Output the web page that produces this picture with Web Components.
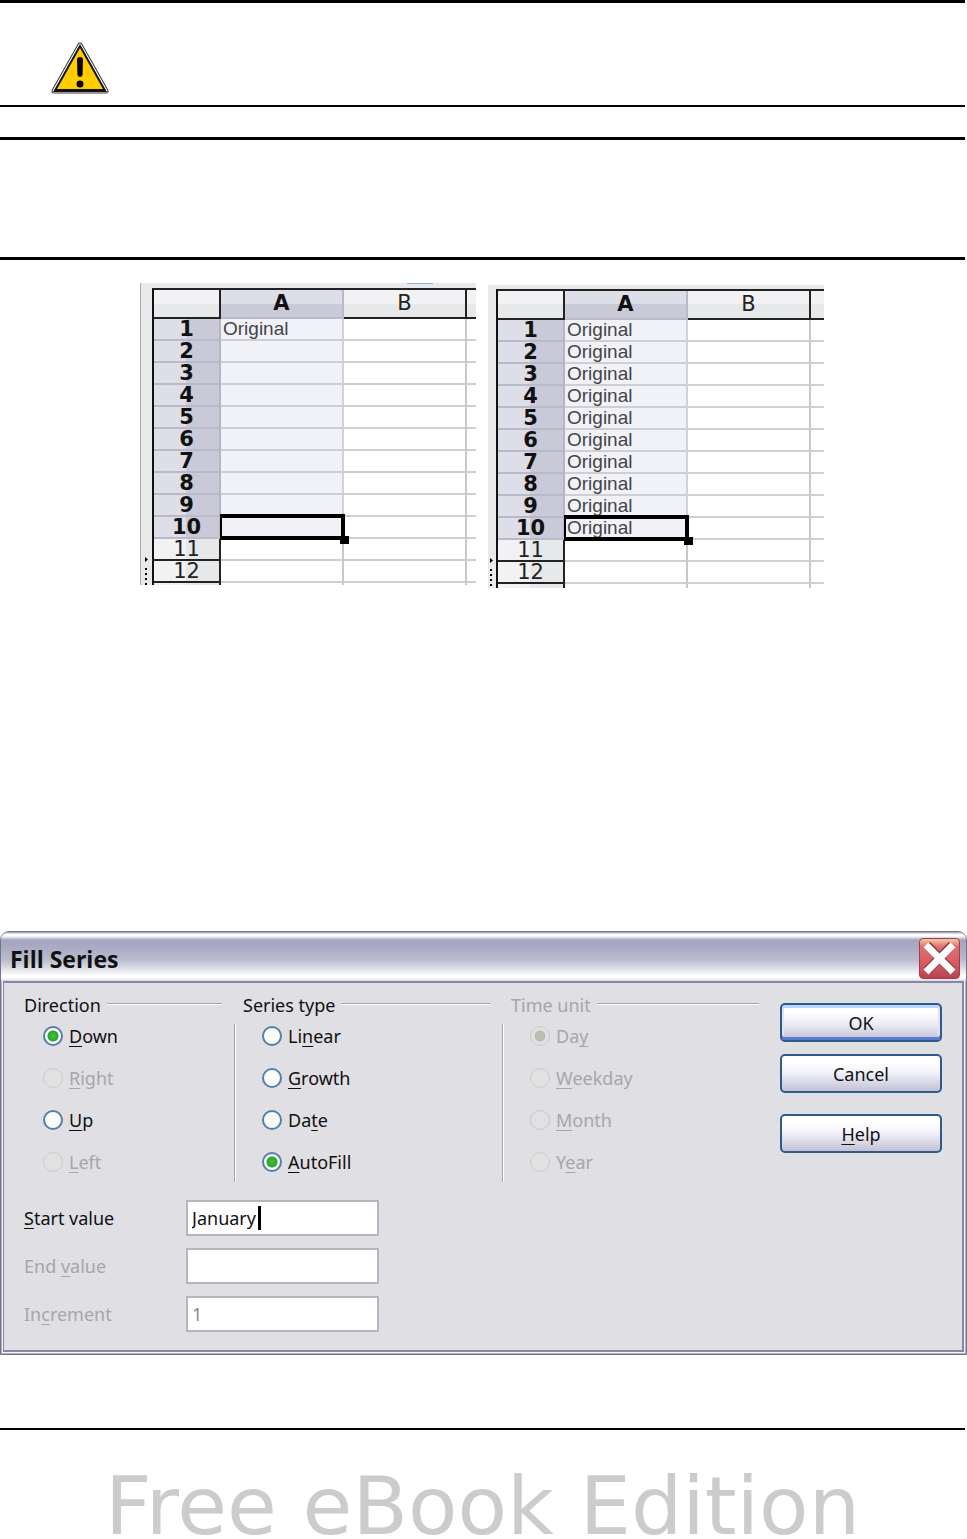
<!DOCTYPE html>
<html lang="en">
<head>
<meta charset="utf-8">
<title>Fill Series</title>
<style>
  body {
    margin: 0;
    background: #fff;
    font-family: "Liberation Sans", sans-serif;
  }
</style>
</head>
<body>
<book-page>
  <note-box class="caution"><warning-icon></warning-icon></note-box>
  <note-box class="blank"></note-box>
  <sheet-pair>
    <calc-sheet class="edge" filled="1"></calc-sheet>
    <calc-sheet class="low" filled="10"></calc-sheet>
  </sheet-pair>
  <fill-dialog heading="Fill Series">
    <radio-group slot="groups" legend="Direction" options="_Down,_Right,_Up,_Left" checked="0" disabled="1,3"></radio-group>
    <radio-group slot="groups" legend="Series type" options="Li_near,_Growth,Da_te,_AutoFill" checked="3"></radio-group>
    <radio-group slot="groups" legend="Time unit" options="Da_y,_Weekday,_Month,Y_ear" checked="0" disabled="0,1,2,3" class="last off"></radio-group>
    <dialog-button slot="buttons" class="default">OK</dialog-button>
    <dialog-button slot="buttons">Cancel</dialog-button>
    <dialog-button slot="buttons" class="apart"><u>H</u>elp</dialog-button>
    <text-field slot="fields" label="_Start value" value="January" caret></text-field>
    <text-field slot="fields" label="End _value" value="" disabled></text-field>
    <text-field slot="fields" label="In_crement" value="1" disabled></text-field>
  </fill-dialog>
  <page-footer>Free eBook Edition</page-footer>
</book-page>

<script>
// "_Down" -> "<u>D</u>own"
const accessKey = (text) => text.replace(/_(.)/, '<u>$1</u>');

class BookPage extends HTMLElement {
  constructor() {
    super();
    this.attachShadow({ mode: 'open' }).innerHTML = `
      <style>
        :host { display: block; }
      </style>
      <slot></slot>
    `;
  }
}

class NoteBox extends HTMLElement {
  constructor() {
    super();
    this.attachShadow({ mode: 'open' }).innerHTML = `
      <style>
        :host {
          display: block;
          box-sizing: border-box;
          margin-right: 2px;
          border-top: 3px solid #000;
          border-bottom: 2px solid #000;
        }
        :host(.caution) { height: 107px; padding: 39px 51px 0; }
        :host(.blank) { height: 123px; margin-top: 30px; border-bottom-width: 3px; }
      </style>
      <slot></slot>
    `;
  }
}

class WarningIcon extends HTMLElement {
  constructor() {
    super();
    this.attachShadow({ mode: 'open' }).innerHTML = `
      <style>
        :host { display: block; }
        svg { display: block; }
      </style>
      <svg width="58" height="53" viewBox="0 0 58 53" aria-hidden="true">
        <path d="M29 3 L55 49 H3 Z" fill="#111" stroke="#333" stroke-width="5" stroke-linejoin="round"/>
        <path d="M29 3 L55 49 H3 Z" fill="#111" stroke="#fff" stroke-width="3" stroke-linejoin="round"/>
        <path d="M29 2 L56 50 H2 Z" fill="#111"/>
        <path d="M29 6 L52 47 H6 Z" fill="#fc0"/>
        <path d="M26 18 Q26 15 29 15 Q32 15 32 18 L31.500 33 Q31 35 29 35 Q27 35 26.500 33 Z" fill="#000"/>
        <circle cx="29" cy="42" r="3.500" fill="#000"/>
      </svg>
    `;
  }
}

class SheetPair extends HTMLElement {
  constructor() {
    super();
    this.attachShadow({ mode: 'open' }).innerHTML = `
      <style>
        :host {
          display: flex;
          justify-content: center;
          align-items: flex-start;
          gap: 12px;
          margin: 23px 3px 0 0;
        }
      </style>
      <slot></slot>
    `;
  }
}

class CalcSheet extends HTMLElement {
  connectedCallback() {
    const filled = Number(this.getAttribute('filled'));
    let rows = '';
    for (let i = 1; i <= 12; i++) {
      const text = i <= filled ? 'Original' : '';
      const cls = i < 10 ? 'sel' : i === 10 ? 'sel cursor' : '';
      rows += `<tr class="${cls}"><th scope="row">${i}</th><td class="a">${text}</td><td></td><td></td></tr>`;
    }
    this.attachShadow({ mode: 'open' }).innerHTML = `
      <style>
        :host {
          display: flex;
          box-sizing: border-box;
          width: 336px;
          height: 302px;
          padding-top: 5px;
          overflow: hidden;
          background: #e8e9ea;
          position: relative;
        }
        :host(.edge) { border-left: 1px solid #aaa; }
        :host(.low) { margin-top: 2px; height: 303px; padding-top: 4px; }
        .gutter {
          box-sizing: border-box;
          flex: none;
          width: 11px;
          padding: 269px 0 0 3px;
        }
        :host(.low) .gutter { width: 8px; padding-left: 1px; }
        .gutter svg { display: block; }
        .tab {
          position: absolute;
          top: 0;
          left: 266px;
          width: 26px;
          height: 1px;
          background: #8faed6;
        }
        table {
          flex: none;
          width: 340px;
          table-layout: fixed;
          border-collapse: separate;
          border-spacing: 0;
          border-left: 2px solid #111;
          border-top: 2px solid #222;
          background: #fff;
        }
        th, td {
          box-sizing: border-box;
          height: 22px;
          padding: 0;
          line-height: 20px;
          white-space: nowrap;
        }
        th { font: 21px/20px "DejaVu Sans", sans-serif; color: #222; }
        thead th {
          height: 29px;
          line-height: 27px;
          border-right: 2px solid #222;
          border-bottom: 2px solid #222;
          background: linear-gradient(#f2f2f4 50%, #e7e8ea 50%);
        }
        thead .a {
          font-weight: bold;
          color: #111;
          border-color: #b9b9cc;
          background: linear-gradient(#dedee8 50%, #c9c9d8 50%);
        }
        tbody th {
          border-right: 2px solid #222;
          border-bottom: 2px solid #222;
          background: linear-gradient(90deg, #f2f2f4 50%, #e7e8ea 50%);
        }
        tbody .sel th {
          font-weight: bold;
          color: #111;
          border-right-color: #b5b5c6;
          border-bottom-color: #b9b9ca;
          background: linear-gradient(90deg, #dedee8 50%, #c9c9d8 50%);
        }
        td {
          border-right: 2px solid #c8c8c8;
          border-bottom: 2px solid #cfcfcf;
        }
        td.a {
          padding-left: 2px;
          font-size: 19px;
          color: #444448;
        }
        .sel td.a { background: #f1f2f7; border-right-color: #d0d0e0; }
        .cursor td.a { position: relative; }
        /* cell cursor with its fill handle */
        .cursor td.a::before {
          content: "";
          position: absolute;
          inset: -3px -3px -3px -1px;
          border: 4px solid #000;
          border-left-width: 2px;
        }
        .cursor td.a::after {
          content: "";
          position: absolute;
          right: -7px;
          bottom: -7px;
          width: 9px;
          height: 8px;
          background: #000;
        }
      </style>
      <div class="gutter">
        <svg width="5" height="28" viewBox="0 0 5 28" aria-hidden="true">
          <path d="M1 0 L4 2.500 L1 5 Z M1 11h2v2h-2z M1 16h2v2h-2z M1 21h2v2h-2z M1 26h2v2h-2z"/>
        </svg>
      </div>
      ${this.classList.contains('edge') ? '<div class="tab"></div>' : ''}
      <table>
        <colgroup><col style="width:67px"><col style="width:123px"><col style="width:123px"><col></colgroup>
        <thead><tr><th></th><th class="a" scope="col">A</th><th scope="col">B</th><th></th></tr></thead>
        <tbody>${rows}<tr><th></th><td></td><td></td><td></td></tr></tbody>
      </table>
    `;
  }
}

class FillDialog extends HTMLElement {
  connectedCallback() {
    this.attachShadow({ mode: 'open' }).innerHTML = `
      <style>
        :host {
          display: block;
          box-sizing: border-box;
          margin-top: 343px;
          border: 1px solid #73738c;
          border-radius: 9px 9px 0 0;
          padding: 0 2px 2px;
          background: #f4f4f8;
          box-shadow: inset 0 0 0 1px #b0b0c4;
          overflow: hidden;
          font: 18px/24px "Noto Sans", sans-serif;
          color: #111;
        }
        header {
          display: flex;
          align-items: center;
          justify-content: space-between;
          box-sizing: border-box;
          height: 49px;
          margin: 0 -2px;
          padding: 4px 6px 0 9px;
          background: linear-gradient(#b0b0c4 0 1px, #fff 2px 4px, #a4a4c0 8px, #adadc6 18px, #bbbccf 28px, #dcdce6 36px, #fff 44px 46px, #d8d8e4 49px);
        }
        h2 {
          margin: 0;
          font: bold 23px/28px "Open Sans", sans-serif;
        }
        .close {
          width: 41px;
          height: 41px;
          padding: 0;
          border: 1px solid #a23c4c;
          border-radius: 4px;
          background: linear-gradient(#f4c8a4, #e07070 20%, #d85c60 60%, #b84450);
        }
        .close svg { display: block; width: 39px; height: 39px; }
        .panel {
          border: 2px solid #8787a2;
          border-left-width: 1px;
          padding: 10px 20px 18px 12px;
          background: #e0dfe3;
        }
        .top {
          display: grid;
          grid-template-columns: 219fr 268fr 269fr 170fr;
        }
        .buttons {
          display: flex;
          flex-direction: column;
          gap: 12px;
          padding: 10px 0 0 8px;
        }
        .fields {
          display: flex;
          flex-direction: column;
          gap: 12px;
          padding: 18px 0 0 8px;
        }
      </style>
      <header>
        <h2>${this.getAttribute('heading')}</h2>
        <button class="close" type="button" aria-label="Close">
          <svg viewBox="0 0 39 39" aria-hidden="true">
            <path d="M7 6 L32 32 M32 6 L7 32" stroke="#8c3444" stroke-width="9"/>
            <path d="M6 6 L33 33 M33 6 L6 33" stroke="#fff" stroke-width="7"/>
          </svg>
        </button>
      </header>
      <div class="panel">
        <div class="top">
          <slot name="groups"></slot>
          <div class="buttons"><slot name="buttons"></slot></div>
        </div>
        <div class="fields"><slot name="fields"></slot></div>
      </div>
    `;
  }
}

class RadioGroup extends HTMLElement {
  connectedCallback() {
    const checked = this.getAttribute('checked');
    const disabled = (this.getAttribute('disabled') || '').split(',');
    const options = this.getAttribute('options').split(',').map((option, i) => `
      <label>
        <input type="radio" name="option" ${String(i) === checked ? 'checked' : ''} ${disabled.includes(String(i)) ? 'disabled' : ''}>
        <span>${accessKey(option)}</span>
      </label>
    `).join('');
    this.attachShadow({ mode: 'open' }).innerHTML = `
      <style>
        :host { display: block; min-width: 0; }
        :host(.off) { color: #a7a6aa; }
        fieldset { margin: 0; padding: 0; border: 0; min-width: 0; }
        legend {
          display: flex;
          align-items: center;
          gap: 6px;
          box-sizing: border-box;
          width: 100%;
          padding: 0 13px 0 8px;
          white-space: nowrap;
        }
        legend::after {
          content: "";
          flex: 1;
          height: 1px;
          margin-bottom: 2px;
          background: #a3a3a7;
          border-bottom: 1px solid #fff;
        }
        .options {
          display: flex;
          flex-direction: column;
          gap: 18px;
          margin-top: 7px;
          padding: 0 0 8px 27px;
          border-right: 1px solid #a3a3a7;
          box-shadow: 1px 0 #fff;
        }
        :host(.last) .options { border-right: 0; box-shadow: none; }
        label { display: flex; align-items: center; gap: 6px; height: 24px; }
        u { text-underline-offset: 3px; text-decoration-thickness: 1px; text-decoration-skip-ink: none; }
        input {
          appearance: none;
          flex: none;
          width: 20px;
          height: 20px;
          margin: 0;
          border: 2px solid #5480a6;
          border-radius: 50%;
          background: #fbfbf9;
        }
        input:checked { background: radial-gradient(circle, #45c045 0, #2aa52a 5px, #fbfbf9 6px); }
        input:disabled { border: 1px solid #cbcac4; background: #e2e1e2; }
        input:checked:disabled { background: radial-gradient(circle, #bebdb4 5px, #e2e1e2 6px); }
        input:disabled + span { color: #a7a6aa; }
      </style>
      <fieldset>
        <legend>${this.getAttribute('legend')}</legend>
        <div class="options">${options}</div>
      </fieldset>
    `;
  }
}

class DialogButton extends HTMLElement {
  constructor() {
    super();
    this.attachShadow({ mode: 'open' }).innerHTML = `
      <style>
        :host { display: block; }
        :host(.apart) { margin-top: 9px; }
        button {
          display: block;
          box-sizing: border-box;
          width: 100%;
          height: 39px;
          padding: 0;
          border: 2px solid #2f5b8c;
          border-radius: 5px;
          background: linear-gradient(#fff 20%, #f0f0fa 50%, #d4d4e2 80%, #c2c2d4);
          font: inherit;
          color: inherit;
        }
        :host(.default) button {
          box-shadow: inset 0 3px #bcd6fa, inset 0 -3px #5a7cd0, inset 2px 0 #dfe5f6, inset -2px 0 #dfe5f6;
        }
        ::slotted(u) { text-underline-offset: 3px; text-decoration-thickness: 1px; }
      </style>
      <button type="button"><slot></slot></button>
    `;
  }
}

class TextField extends HTMLElement {
  connectedCallback() {
    const disabled = this.hasAttribute('disabled') ? 'disabled' : '';
    this.attachShadow({ mode: 'open' }).innerHTML = `
      <style>
        :host { display: flex; align-items: center; }
        :host([disabled]) { color: #a7a6aa; }
        label { width: 162px; }
        u { text-underline-offset: 3px; text-decoration-thickness: 1px; text-decoration-skip-ink: none; }
        .box { position: relative; }
        input {
          display: block;
          box-sizing: border-box;
          width: 193px;
          height: 36px;
          padding: 0 4px;
          border: 2px solid #b2b7bd;
          background: #fff;
          font: inherit;
          color: inherit;
        }
        input:disabled { color: #8c8c90; }
        .caret {
          position: absolute;
          left: 72px;
          top: 6px;
          width: 3px;
          height: 24px;
          background: #000;
        }
      </style>
      <label for="field">${accessKey(this.getAttribute('label'))}</label>
      <div class="box">
        <input id="field" type="text" value="${this.getAttribute('value')}" ${disabled}>
        ${this.hasAttribute('caret') ? '<span class="caret"></span>' : ''}
      </div>
    `;
  }
}

class PageFooter extends HTMLElement {
  constructor() {
    super();
    this.attachShadow({ mode: 'open' }).innerHTML = `
      <style>
        :host {
          display: block;
          margin: 73px 2px 0 0;
          padding-top: 43px;
          border-top: 2px solid #000;
        }
        p {
          margin: 0;
          font: 81px/66px "DejaVu Sans", sans-serif;
          color: #ccc;
          text-align: center;
          white-space: nowrap;
        }
      </style>
      <p><slot></slot></p>
    `;
  }
}

customElements.define('book-page', BookPage);
customElements.define('note-box', NoteBox);
customElements.define('warning-icon', WarningIcon);
customElements.define('sheet-pair', SheetPair);
customElements.define('calc-sheet', CalcSheet);
customElements.define('fill-dialog', FillDialog);
customElements.define('radio-group', RadioGroup);
customElements.define('dialog-button', DialogButton);
customElements.define('text-field', TextField);
customElements.define('page-footer', PageFooter);
</script>
</body>
</html>
